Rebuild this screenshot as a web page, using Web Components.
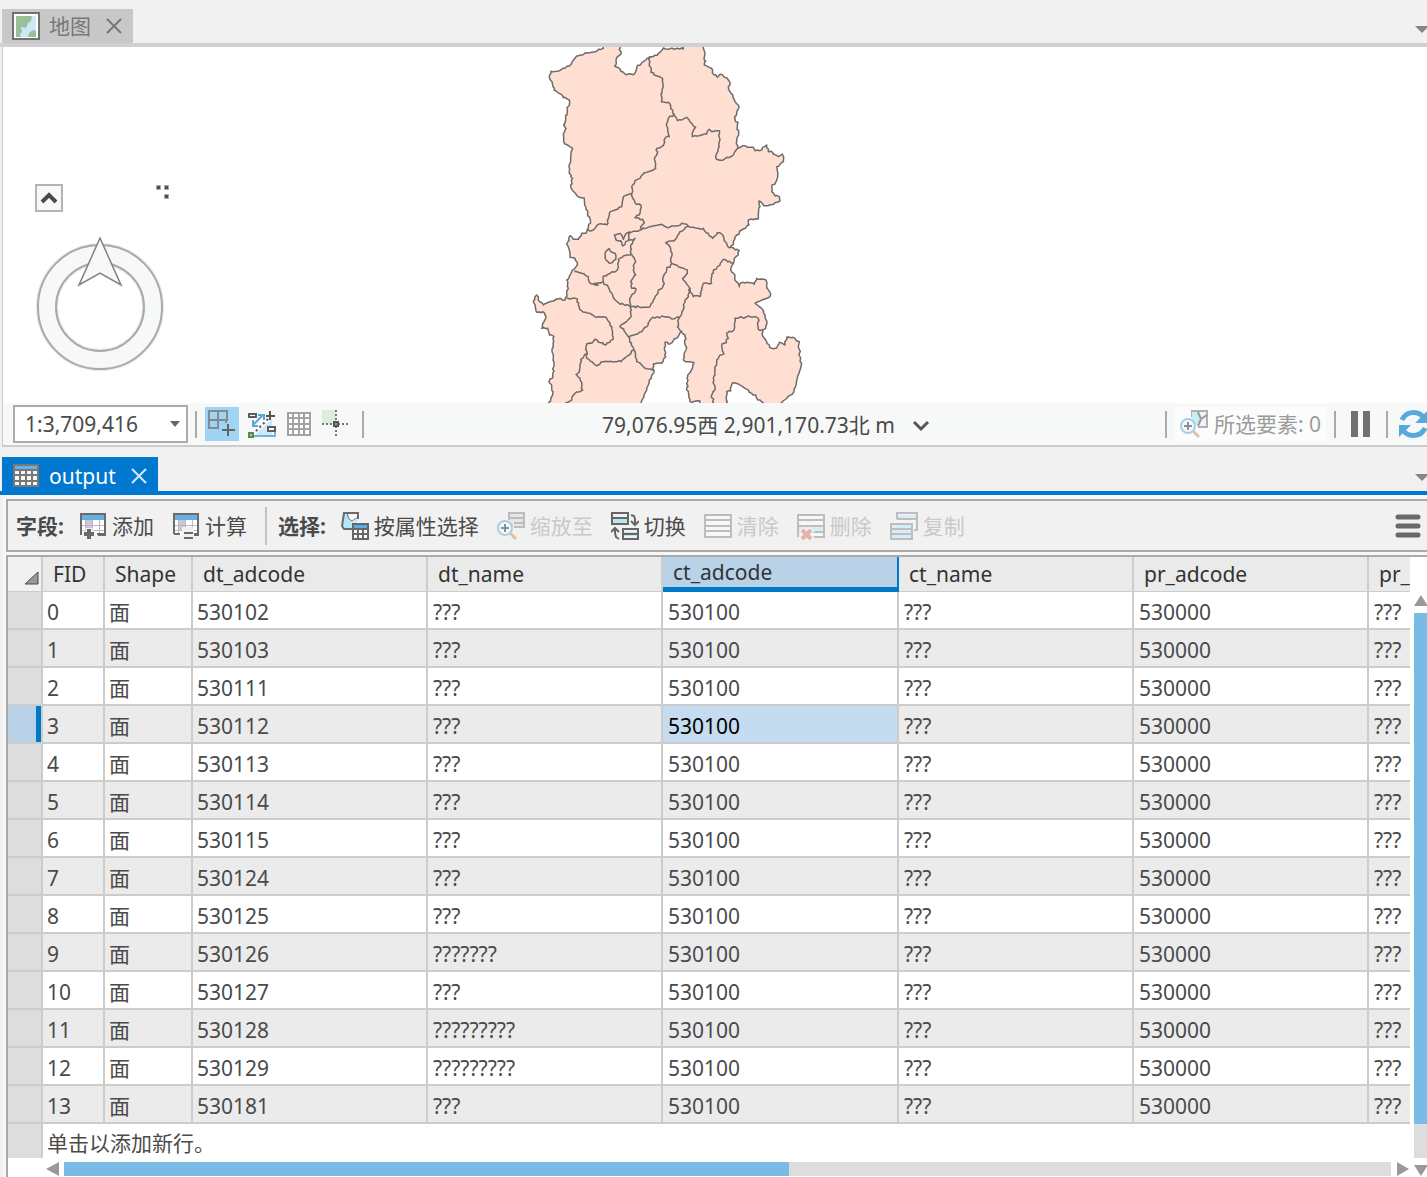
<!DOCTYPE html>
<html lang="zh-CN">
<head>
<meta charset="utf-8">
<title>output</title>
<style>
html,body{margin:0;height:100%}
body{font:21px/28px "Noto Sans","Noto Sans CJK SC",sans-serif;color:#4a4a4a;background:#f1f1f1;overflow:hidden}
</style>
</head>
<body>
<gis-app></gis-app>
<script>
const define = (name, html, setup) => {
  const t = document.createElement('template');
  t.innerHTML = `<style>*{box-sizing:border-box}button,select{font:inherit;color:inherit;background:none;border:0;padding:0;margin:0}svg{display:block;flex:none}</style>` + html;
  customElements.define(name, class extends HTMLElement {
    connectedCallback() {
      if (this.shadowRoot) return;
      const view = t.content.cloneNode(true);
      if (setup) setup(this, view);
      this.attachShadow({mode: 'open'}).append(view);
    }
  });
};

const tableIcon = `<path fill="#fff" d="M1 2h26v21H1z"/><path fill="#cfc3e0" d="M6 8h7v11H6z"/><path fill="#66b1e3" d="M2 3h24v5H2z"/><path fill="none" stroke="#bbb" d="M6.5 8v14M13.5 8v14M20.5 8v14M2 13.5h24M2 18.5h24"/><path fill="none" stroke="#6b6b6b" stroke-width="2" d="M2 22V2h24v21h-7"/>`;
const lens = `<circle cx="8" cy="16" r="7" fill="#f5f9fc" stroke="#a5cfe9" stroke-width="2"/><path stroke="#8d8d8d" stroke-width="2" d="M4 16h8M8 12v8"/><path stroke="#dfc2a2" stroke-width="3" d="M13 21l6 6"/>`;
const icons = {
  map: `<path fill="#fff" stroke="#6d7272" stroke-width="2" d="M1 1h26v26H1z"/><path fill="#cfe7f8" d="M4 4h20v21H4z"/><path fill="#9ac09a" d="M4 4h16l-1 5-3 2-2 5-5-1 1 5-2 2 1 3H4zM16 25l1-4 4-3 3 1v6z"/>`,
  grid: `<path fill="#f7f7f7" d="M1 2h26v22H1z"/><path fill="#66b1e3" d="M2 3h24v5H2z"/><path fill="none" stroke="#777" stroke-width="2" d="M2 3h24v21H2zM2 8h24M2 13h24M2 19h24M8 8v16M14 8v16M20 8v16"/>`,
  add: tableIcon + `<path stroke="#f1f1f1" stroke-width="7" d="M3 22h13M10 16v12"/><path stroke="#696969" stroke-width="4" d="M5 22h10M10 17v10"/><path stroke="#6b6b6b" stroke-width="2" d="M2 15v8M18 22h8"/>`,
  calc: tableIcon + `<path fill="#f1f1f1" d="M10 15h12v12H10z"/><path stroke="#696969" stroke-width="2" d="M2 22h6M12 21h9M12 26h9M22 22h4"/>`,
  attr: `<path fill="#b3e8f8" stroke="#6b6b6b" stroke-width="2" d="M11 17H3l-2-3 2-13h14v6"/><path fill="#f7f7f7" d="M8 2h8v5l-4 3-4-2z"/><path fill="none" stroke="#777" d="M6 2l2 5 3 2 6-4"/><path fill="#fff" d="M11 11h17v17H11z"/><path fill="#55aee5" d="M12 13h15v4H12z"/><path fill="none" stroke="#666" stroke-width="2" d="M12 12h15v15H12zM12 17h15M12 22h15M17 17v10M22 17v10"/>`,
  zoomto: `<path fill="#e6e6e6" stroke="#bcbcbc" stroke-width="2" d="M12 8V1h15v14H17M12 6h15M17 11h10"/>` + lens,
  swap: `<path fill="#b8e7f2" d="M1 7h16v4H1zM12 20h16v4H12z"/><path fill="none" stroke="#666" stroke-width="2" d="M1 1h16v11H1zM1 6h16M12 17h15v10H12zM12 22h15M20 3l3 1 1 3v6M20 9l4 4 4-4M8 27l-3-2-1-4v-4M0 20l4-4 4 4"/>`,
  clear: `<path fill="#f7f7f7" stroke="#bdbdbd" stroke-width="2" d="M1 3h26v22H1zM1 8h26M1 14h26M1 19h26"/>`,
  del: `<path fill="#f7f7f7" d="M1 3h26v22H1z"/><path fill="#d5eef7" d="M2 14h24v6H2z"/><path fill="none" stroke="#bdbdbd" stroke-width="2" d="M1 25V3h26v22H15M1 8h26M1 14h26M1 20h26"/><path stroke="#f1f1f1" stroke-width="7" d="M4 17l11 11M15 17L4 28"/><path stroke="#e3b3a7" stroke-width="4" d="M5 18l9 9M14 18l-9 9"/>`,
  copy: `<path fill="#f4f4f4" d="M7 1h20v17H7z"/><path fill="#d5eef7" d="M7 3h20v4H7z"/><path fill="none" stroke="#bdbdbd" stroke-width="2" d="M7 7V1h20v17h-3M7 7h20"/><path fill="#d5eef7" stroke="#bdbdbd" stroke-width="2" d="M1 12h21v15H1zM1 17h21M1 22h21"/>`,
  snapgrid: `<path fill="none" stroke="#7f8b93" stroke-width="2" d="M1 1h18v9H1zM10 1v17H1V1M18 9v4"/><path stroke="#646464" stroke-width="2" d="M14 20h13M20 14v12"/>`,
  snap: `<path fill="#cfe7f7" d="M5 27L24 9v18z"/><path stroke="#70b3e0" stroke-width="2" d="M6 26h22M27 20v6"/><path fill="none" stroke="#5aa7d8" stroke-width="2" d="M5 15L15 5M10 5h6v5M5 10v6h5"/><path stroke="#555" stroke-width="2" stroke-dasharray="2 3" d="M8 21L22 7"/><path fill="#fff" stroke="#5d5d5d" stroke-width="2" d="M1 4h7v3H1zM20 17h7v4h-7z"/><path stroke="#555" stroke-width="2" d="M18 6h9M22 1v9"/><path fill="#9fcf9f" stroke="#548a54" stroke-width="2" d="M1 23h4v4H1z"/>`,
  lattice: `<path fill="#fff" stroke="#a3a3a3" stroke-width="2" d="M3 3h22v22H3zM3 8h22M3 14h22M3 19h22M8 3v22M14 3v22M19 3v22"/>`,
  cross: `<path fill="#dceedb" d="M0 0h14v14H0z"/><path stroke="#777" stroke-width="2" stroke-dasharray="2 2" d="M0 14h28M14 0v28"/><path fill="#999" stroke="#555" stroke-width="2" d="M12 12h4v4h-4z"/>`,
  selected: `<path fill="#f1f4f4" stroke="#b0b0b0" stroke-width="2" d="M12 7V1h15v16h-9"/><path fill="#c7eef5" d="M12 2h7l2 9-5 4-4-4z"/><path fill="none" stroke="#999" stroke-width="2" d="M18 2l3 7-3 7M21 9l6-4"/>` + lens,
  pause: `<path fill="#707070" d="M4 1h7v26H4zM16 1h7v26h-7z"/>`,
  refresh: `<path fill="none" stroke="#58a8dc" stroke-width="5" d="M3 10C7 1 19 0 25 8M26 18C22 27 9 28 4 20"/><path fill="#58a8dc" d="M28 1v12H16zM0 27V15h12z"/>`,
  close: `<path fill="none" stroke="currentColor" stroke-width="2" d="M7 7l14 14M21 7L7 21"/>`,
  down: `<path fill="none" stroke="#555" stroke-width="3" d="M7 11l7 7 7-7"/>`,
  menu: `<path stroke="#696969" stroke-width="5" stroke-linecap="round" d="M4 5h20M4 14h20M4 23h20"/>`
};
define('x-icon', `<style>:host{display:block;flex:none;width:28px;height:28px}</style><svg width="28" height="28" viewBox="0 0 28 28" fill="none" aria-hidden="true"></svg>`,
  (el, r) => { r.querySelector('svg').innerHTML = icons[el.getAttribute('name')]; });

define('pane-tab', `<style>
:host{display:flex;align-items:flex-end;justify-content:space-between;padding-left:2px;height:38px;border-bottom:4px solid var(--line)}
.tab{display:flex;align-items:center;height:34px;padding:var(--drop,0) 5px 0 10px;background:var(--tab);color:var(--ink)}
.name{margin:0 9px}
.more{width:12px;height:34px;padding-top:8px;overflow:hidden;display:flex;align-items:center}
button{width:28px;height:28px}.tab button{color:var(--x)}
</style>
<div class="tab"><x-icon></x-icon><span class="name"><slot></slot></span><button aria-label="关闭"><x-icon name="close"></x-icon></button></div>
<button class="more" aria-label="更多"><svg width="14" height="8"><path fill="#858585" d="M0 0h14L7 7z"/></svg></button>`,
  (el, r) => r.querySelector('x-icon').setAttribute('name', el.getAttribute('icon')));

define('tool-button', `<style>:host{display:block}button{display:flex;align-items:center;gap:5px;height:34px;white-space:nowrap}button:disabled{color:#c9c9c9}</style>
<button><x-icon></x-icon><span><slot></slot></span></button>`,
  (el, r) => {
    r.querySelector('x-icon').setAttribute('name', el.getAttribute('icon'));
    r.querySelector('button').disabled = el.hasAttribute('disabled');
  });

define('bar-line', `<style>:host{display:block;flex:none;width:2px;height:27px;background:#aaa}</style>`);

define('map-compass', `<style>:host{display:block}.top{display:flex;justify-content:space-between;width:135px}
.fold{width:28px;height:28px;border:2px solid #b4b4b4;background:#f7f9f9}</style>
<div class="top"><button class="fold" aria-label="折叠"><svg width="24" height="24"><path fill="none" stroke="#4a4a4a" stroke-width="4" d="M5 16l7-7 7 7"/></svg></button>
<svg width="14" height="16"><path fill="#505050" stroke="#aaa" d="M.5 1.5h4v4h-4zM8.5 1.5h4v4h-4zM8.5 10.5h4v4h-4z"/></svg></div>
<svg width="132" height="164" viewBox="0 0 132 164">
<circle cx="65" cy="95" r="53" fill="none" stroke="#f7f9f9" stroke-width="18"/>
<g fill="none"><circle cx="65" cy="95" r="63" stroke="#e8e8e8" stroke-width="2"/><circle cx="65" cy="95" r="62" stroke="#aaa" stroke-width="2"/><circle cx="65" cy="95" r="43" stroke="#e8e8e8" stroke-width="2"/><circle cx="65" cy="95" r="44" stroke="#aaa" stroke-width="2"/></g>
<path fill="#f7f9f9" stroke="#808080" stroke-width="1.5" d="M65 26l21 47-21-12-21 12z"/></svg>`);

/* District boundaries, three map units to the pixel. */
const outline = '250,10 250,25 170,48 150,77 135,85 115,93 93,94 88,113 97,130 102,150 122,162 130,173 148,180 142,210 137,235 131,255 138,265 131,290 135,312 158,325 152,352 147,380 148,400 158,415 152,435 158,452 172,468 193,475 197,500 203,520 211,540 205,560 198,580 185,580 175,598 160,598 150,587 140,612 148,630 150,652 165,655 172,675 155,695 140,720 145,745 140,760 135,780 115,777 100,783 70,795 55,780 50,765 40,783 50,817 68,815 78,830 72,845 65,865 83,865 88,885 102,890 98,940 101,980 97,1015 87,1025 95,1035 98,1065 90,1085 70,1100 360,1100 372,1065 380,1045 388,1020 402,998 398,985 400,972 425,970 437,950 433,925 435,907 445,912 460,902 470,895 485,875 495,890 498,930 490,960 505,965 522,968 503,1010 500,1050 510,1085 540,1083 545,1100 622,1100 620,1055 632,1053 638,1028 655,1032 695,1060 725,1085 750,1100 780,1092 800,1075 822,1055 830,1020 838,995 845,970 838,940 838,905 825,895 800,892 795,915 778,907 770,924 755,925 740,905 728,888 728,870 737,865 741,845 735,825 725,805 705,790 725,780 750,770 752,762 740,740 738,720 710,715 703,733 690,728 663,728 658,740 645,720 645,705 632,690 640,670 643,655 655,645 658,632 632,622 640,605 650,585 665,570 687,555 685,540 695,537 715,537 715,520 720,500 717,483 728,492 745,497 765,488 780,483 778,470 765,468 755,455 756,435 768,425 774,400 770,380 790,365 787,342 775,350 758,337 745,335 740,315 725,330 705,332 700,322 683,322 668,317 653,325 650,305 656,285 651,268 654,247 645,237 650,220 657,202 645,185 633,160 625,140 630,127 620,113 600,103 592,112 577,98 575,85 553,75 555,40 548,10 495,10 490,27 437,27 430,24 412,46 390,50 370,65 350,82 343,102 318,104 300,87 284,78 288,60 302,43 298,10';
const borders = [
 '390,50 388,70 393,97 410,107 428,115 426,150 424,185 445,187 462,222 445,235 440,250 443,270 448,290 437,292 425,320 411,325 410,345 403,355 407,385 385,395 372,398 360,415 345,422 335,440 335,462 310,470 305,500 285,510 268,520 260,555 235,553 212,573 200,567',
 '462,222 473,242 500,232 512,248 527,262 517,280 517,290 560,282 568,268 575,275 598,272 598,320 588,345 590,358 610,360 640,345 653,325',
 '335,462 345,488 362,495 360,520 345,533 368,538 373,548 362,560 366,570',
 '330,580 360,570 390,560 425,553 440,562 470,558 485,550 505,558 530,565 550,565 565,580 578,595 592,578 605,582 612,600 622,618 632,622',
 '505,558 480,575 465,600 437,608 452,625 455,670 440,690 430,710 430,735 410,765 400,780 388,802',
 '330,575 315,585 310,598 300,580 283,585 288,600 305,605 308,618 325,602 345,595 332,615 333,640 345,660 340,690 347,705 332,725 335,745 348,747 333,770 330,800 333,830 320,845 300,858 325,890 342,930 350,965 370,980 402,992',
 '330,575 325,602',
 '268,625 257,635 255,655 268,670 287,658 285,640 275,637 268,625',
 '163,695 185,700 205,710 208,727 225,735 250,725',
 '225,733 230,730 234,736 222,728',
 '333,645 310,648 295,658 292,690 270,700 250,708 250,725 270,755 295,788 333,800 388,802',
 '140,775 172,777 175,795 185,812 210,820 228,832 258,832 275,860 277,885 280,898 258,915 240,908 225,898 215,910 200,912 200,955 232,977 250,965 303,965 342,930',
 '200,940 182,958 178,995 168,1003 180,1015 188,1050 165,1060 155,1080 135,1095',
 '325,890 365,875 398,832 440,830 455,837 478,832 490,810 495,780 505,770 510,745 488,715 502,700 502,690 475,680 455,670',
 '478,832 472,860 485,875',
 '510,745 520,770 540,770 550,730 575,730 580,690 600,675 610,658 640,670',
 '583,1095 575,1065 585,1050 580,1015 590,970 600,945 612,942 605,920 625,895 620,880 642,870 645,835 680,830 715,835 715,868 728,870'
];
/* Adds the small wriggles of a surveyed border between two vertices. */
function roughen(text, seed) {
  const pts = text.split(' ').map(p => p.split(',').map(Number));
  const rnd = () => ((seed = (seed * 16807) % 2147483647) / 2147483647) - .5;
  let d = 'M' + pts[0];
  for (let i = 1; i < pts.length; i++) {
    const [ax, ay] = pts[i - 1], [bx, by] = pts[i], n = Math.max(1, Math.round(Math.hypot(bx - ax, by - ay) / 7));
    for (let k = 1; k <= n; k++) {
      const j = k < n ? 6 : 0;
      d += 'L' + Math.round(ax + (bx - ax) * k / n + rnd() * j) + ' ' + Math.round(ay + (by - ay) * k / n + rnd() * j);
    }
  }
  return d;
}
define('map-view', `<style>
:host{display:block;position:relative;height:356px;background:#fff;border-left:1px solid #ccc;margin-left:2px;overflow:hidden}
.row{display:grid;grid-template-columns:517fr 300px 607fr}
.row svg{grid-column:2}
map-compass{position:absolute;left:32px;top:137px}
</style><div class="row"><svg width="300" height="356" viewBox="0 21 900 1068" role="img" aria-label="地图"><g fill="none" stroke="#6e6b6b" stroke-width="4.5" stroke-linejoin="round"></g></svg></div><map-compass></map-compass>`,
  (el, r) => {
    r.querySelector('g').innerHTML = `<path fill="#ffdfd2" d="${roughen(outline, 77)}"/>` + borders.map((b, i) => `<path d="${roughen(b, 91 + i)}"/>`).join('');
  });

define('map-status', `<style>
:host{display:flex;align-items:center;height:44px;margin-left:2px;padding-left:10px;background:#f7f9f9;border-left:1px solid #ccc;border-bottom:2px solid #ccc;overflow:hidden;white-space:nowrap}
.scale{display:grid;width:175px;height:38px;margin-right:7px}
.scale>*{grid-area:1/1}
.scale svg{place-self:center end;margin-right:8px;pointer-events:none}
select{appearance:none;border:2px solid #aaa;background:#fff;padding:0 10px}
button{display:flex;align-items:center;justify-content:center;height:34px}
.tools{display:flex;gap:9px;margin:0 12px 0 8px}
.on{width:34px;background:#a0d4f3}
.grow{flex:1}
.xy{gap:12px;padding:2px 0 0 8px}
.sel{gap:6px;padding:0 5px;margin:0 8px;background:#fbfcfc;color:#9b9b9b}
.pause{margin:0 11px}
.refresh{width:28px;margin-left:11px}
</style>
<label class="scale"><select aria-label="比例"><option>1:3,709,416</option></select><svg width="10" height="6"><path fill="#666" d="M0 0h10L5 6z"/></svg></label>
<bar-line></bar-line>
<div class="tools"><button class="on" aria-label="捕捉"><x-icon name="snapgrid"></x-icon></button><button aria-label="推断约束"><x-icon name="snap"></x-icon></button><button aria-label="格网"><x-icon name="lattice"></x-icon></button><button aria-label="校正"><x-icon name="cross"></x-icon></button></div>
<bar-line></bar-line><span class="grow"></span>
<button class="xy"><span>79,076.95西 2,901,170.73北 m</span><x-icon name="down"></x-icon></button>
<span class="grow"></span><bar-line></bar-line>
<button class="sel"><x-icon name="selected"></x-icon><span>所选要素: 0</span></button><bar-line></bar-line>
<button class="pause" aria-label="暂停"><x-icon name="pause"></x-icon></button><bar-line></bar-line>
<button class="refresh" aria-label="刷新"><x-icon name="refresh"></x-icon></button>`);

define('table-tools', `<style>
:host{display:flex;align-items:center;gap:18px;height:53px;padding:0 5px 0 8px;background:#f1f1f1;border:2px solid #aaa;border-right:0;white-space:nowrap}
.group{display:flex;align-items:center;gap:15px}.set{display:flex;gap:18px}
bar-line{height:38px;background:#c2c2c2}
.pick{margin-left:-7px}
.menu{margin-left:auto;height:34px}
</style>
<div class="group"><b>字段:</b><div class="set"><tool-button icon="add">添加</tool-button><tool-button icon="calc">计算</tool-button></div></div>
<bar-line></bar-line>
<div class="group pick"><b>选择:</b><div class="set"><tool-button icon="attr">按属性选择</tool-button><tool-button icon="zoomto" disabled>缩放至</tool-button><tool-button icon="swap">切换</tool-button><tool-button icon="clear" disabled>清除</tool-button><tool-button icon="del" disabled>删除</tool-button><tool-button icon="copy" disabled>复制</tool-button></div></div>
<button class="menu" aria-label="菜单"><x-icon name="menu"></x-icon></button>`);

define('scroll-bar', `<style>
:host{display:flex;align-items:center;gap:5px;background:#fff}
:host([vertical]){flex-direction:column}
.track{flex:1;display:flex;background:#ddd;height:14px}
:host([vertical]) .track{width:13px;height:auto;flex-direction:column}
.thumb{background:#78bbe7;flex:0 0 var(--size)}
</style><svg width="14" height="14"><path fill="#999"/></svg><div class="track"><div class="thumb"></div></div><svg width="14" height="14"><path fill="#999"/></svg>`,
  (el, r) => {
    const p = r.querySelectorAll('path'), v = el.hasAttribute('vertical');
    p[0].setAttribute('d', v ? 'M0 12h14L7 1z' : 'M14 0v14L1 7z');
    p[1].setAttribute('d', v ? 'M0 2h14L7 13z' : 'M1 0v14l12-7z');
  });

define('attribute-table', `<style>
:host{display:grid;grid-template-columns:minmax(0,1fr) 17px;grid-template-rows:minmax(0,1fr) 18px;flex:1;min-height:0;background:#fff;border-top:2px solid #aaa;border-left:2px solid #aaa}
.view{overflow:hidden}
table{table-layout:fixed;width:1596px;border-spacing:0}
th,td{border-right:2px solid #ccc;border-bottom:2px solid #ccc;padding:0 4px;height:38px;text-align:left;font-weight:400;white-space:nowrap;overflow:hidden}
td{padding-top:4px}
td:nth-child(n+5){padding-left:5px}
thead th{height:35px;background:#eaeaea;color:#333;padding:0 10px;border-bottom-width:1px}
thead th:first-child{padding:0;background:#f1f1f1}
.corner{margin:8px 0 0 15px}
tbody th{background:#ddd}
tbody tr:nth-child(even) td{background:#ebebeb}
thead th.sel{background:#bad2e7;border-bottom:5px solid #007ac6;border-right-color:#007ac6}
td.sel{background:#c5dbef!important;color:#000}
th.cur{background:#bad2e7;position:relative}
th.cur::after{content:"";position:absolute;top:0;bottom:0;right:0;width:5px;background:#007ac6}
tfoot th{background:#ddd;border-bottom:0;height:34px}tfoot td{border:0;height:34px}
.v{padding:37px 0 0;grid-row:1/3;grid-column:2;justify-self:end;width:13px;--size:511px}
.h{padding-left:37px;--size:725px;align-self:end;margin-bottom:1px}
</style>
<div class="view"><table><colgroup><col width="35"><col width="62"><col width="88"><col width="235"><col width="235"><col width="236"><col width="235"><col width="235"><col width="235"></colgroup>
<thead><tr></tr></thead><tbody></tbody><tfoot><tr><th></th><td colspan="8">单击以添加新行。</td></tr></tfoot></table></div>
<scroll-bar class="v" vertical></scroll-bar><scroll-bar class="h"></scroll-bar>`,
  (el, r) => {
    const names = ['FID', 'Shape', 'dt_adcode', 'dt_name', 'ct_adcode', 'ct_name', 'pr_adcode', 'pr_name'];
    r.querySelector('thead tr').innerHTML = '<th><svg class="corner" width="17" height="15"><path fill="#999" stroke="#4a4a4a" d="M15 1v12H2z"/></svg></th>' + names.map((n, i) => `<th scope="col"${i === 4 ? ' class="sel"' : ''}>${n}</th>`).join('');
    const codes = [102, 103, 111, 112, 113, 114, 115, 124, 125, 126, 127, 128, 129, 181], wide = {9: 7, 11: 9, 12: 9};
    r.querySelector('tbody').innerHTML = codes.map((c, i) => `<tr><th${i === 3 ? ' class="cur"' : ''}></th>` +
      [i, '面', '530' + c, '?'.repeat(wide[i] || 3), '530100', '???', '530000', '???'].map((v, k) => `<td${i === 3 && k === 4 ? ' class="sel"' : ''}>${v}</td>`).join('') + '</tr>').join('');
  });

define('gis-app', `<style>
:host{display:flex;flex-direction:column;height:100vh}
.map{margin-top:8px;height:39px;--tab:#c8c8c8;--line:#d0d0d0;--ink:#777;--x:#777}
.data{margin-top:10px;--drop:4px;--tab:#0078d0;--line:#0078d0;--ink:#fff;--x:#d5e9f8}
.panel{flex:1;min-height:0;display:flex;flex-direction:column;gap:3px;padding:4px 0 0 3px;margin-left:3px;background:#f7f7f7}
</style>
<pane-tab class="map" icon="map">地图</pane-tab>
<map-view></map-view><map-status></map-status>
<pane-tab class="data" icon="grid">output</pane-tab>
<div class="panel"><table-tools></table-tools><attribute-table></attribute-table></div>`);
</script>
</body>
</html>
